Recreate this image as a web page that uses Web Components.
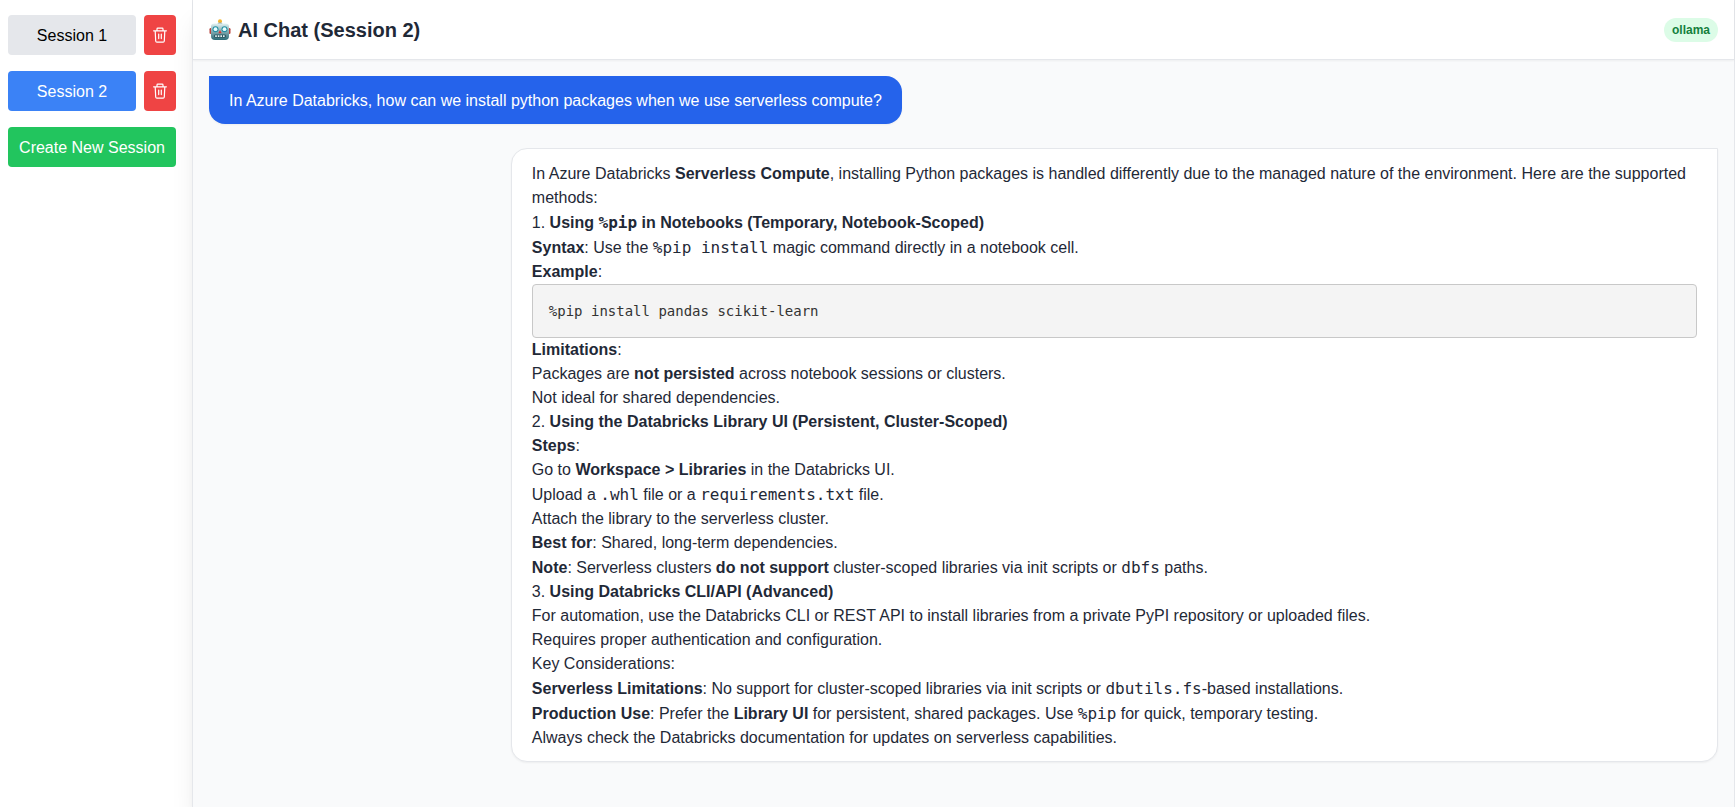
<!DOCTYPE html>
<html lang="en">
<head>
<meta charset="utf-8">
<meta name="viewport" content="width=device-width, initial-scale=1">
<title>AI Chat</title>
<style>
    body {
        margin: 0;
        font: 16px/24px "Liberation Sans", Arial, sans-serif;
        color: #1f2937;
    }
</style>
</head>
<body>
<chat-app>
    <session-list slot="sidebar">
        <session-item>Session 1</session-item>
        <session-item active>Session 2</session-item>
    </session-list>
    <chat-header slot="header" provider="ollama">AI Chat (Session 2)</chat-header>
    <chat-message from="user">In Azure Databricks, how can we install python packages when we use serverless compute?</chat-message>
    <chat-message from="ai">
        <p>In Azure Databricks <strong>Serverless Compute</strong>, installing Python packages is handled differently due to the managed nature of the environment. Here are the supported methods:</p>
        <p>1. <strong>Using <inline-code>%pip</inline-code> in Notebooks (Temporary, Notebook-Scoped)</strong></p>
        <p><strong>Syntax</strong>: Use the <inline-code>%pip install</inline-code> magic command directly in a notebook cell.</p>
        <p><strong>Example</strong>:</p>
        <code-block>%pip install pandas scikit-learn</code-block>
        <p><strong>Limitations</strong>:</p>
        <p>Packages are <strong>not persisted</strong> across notebook sessions or clusters.</p>
        <p>Not ideal for shared dependencies.</p>
        <p>2. <strong>Using the Databricks Library UI (Persistent, Cluster-Scoped)</strong></p>
        <p><strong>Steps</strong>:</p>
        <p>Go to <strong>Workspace &gt; Libraries</strong> in the Databricks UI.</p>
        <p>Upload a <inline-code>.whl</inline-code> file or a <inline-code>requirements.txt</inline-code> file.</p>
        <p>Attach the library to the serverless cluster.</p>
        <p><strong>Best for</strong>: Shared, long-term dependencies.</p>
        <p><strong>Note</strong>: Serverless clusters <strong>do not support</strong> cluster-scoped libraries via init scripts or <inline-code>dbfs</inline-code> paths.</p>
        <p>3. <strong>Using Databricks CLI/API (Advanced)</strong></p>
        <p>For automation, use the Databricks CLI or REST API to install libraries from a private PyPI repository or uploaded files.</p>
        <p>Requires proper authentication and configuration.</p>
        <p>Key Considerations:</p>
        <p><strong>Serverless Limitations</strong>: No support for cluster-scoped libraries via init scripts or <inline-code>dbutils.fs</inline-code>-based installations.</p>
        <p><strong>Production Use</strong>: Prefer the <strong>Library UI</strong> for persistent, shared packages. Use <inline-code>%pip</inline-code> for quick, temporary testing.</p>
        <p>Always check the Databricks documentation for updates on serverless capabilities.</p>
    </chat-message>
</chat-app>

<script>
function defineElement(name, html, setup) {
    const template = document.createElement("template");
    // Trailing whitespace would show up as a space after inline elements
    template.innerHTML = html.trim();

    customElements.define(name, class extends HTMLElement {
        constructor() {
            super();
            this.attachShadow({mode: "open"});
            this.shadowRoot.append(template.content.cloneNode(true));
        }

        connectedCallback() {
            if (setup) {
                setup(this, this.shadowRoot);
            }
        }
    });
}

defineElement("chat-app", `
    <style>
        :host {
            display: flex;
            min-height: 100vh;
            background-color: white;
        }

        main {
            flex: 1;
            min-width: 0;
            display: flex;
            flex-direction: column;

            border: solid #e5e7eb;
            border-width: 0 1px;
            background-color: #f9fafb;
            box-shadow: 0 20px 25px -5px rgba(0, 0, 0, 0.1), 0 8px 10px -6px rgba(0, 0, 0, 0.1);
        }

        .messages {
            display: flex;
            flex-direction: column;
            gap: 24px;
            padding: 16px;
        }
    </style>
    <slot name="sidebar"></slot>
    <main>
        <slot name="header"></slot>
        <div class="messages"><slot></slot></div>
    </main>
`);

defineElement("session-list", `
    <style>
        :host {
            flex: none;
            display: block;
            box-sizing: border-box;
            width: 192px;
            padding: 15px 16px 16px 8px;
        }

        nav {
            display: flex;
            flex-direction: column;
            gap: 16px;
        }

        button {
            padding: 9px 0 7px;
            border: 0;
            border-radius: 4px;
            background-color: #22c55e;
            color: white;
            font: inherit;
            white-space: nowrap;
            cursor: pointer;
        }
    </style>
    <nav aria-label="Sessions">
        <slot></slot>
        <button type="button">Create New Session</button>
    </nav>
`);

defineElement("session-item", `
    <style>
        :host {
            display: flex;
            gap: 8px;
        }

        button {
            padding: 9px 8px 7px;
            border: 0;
            border-radius: 4px;
            font: inherit;
            cursor: pointer;
        }

        .open {
            flex: 1;
            background-color: #e5e7eb;
            color: black;
        }

        :host([active]) .open {
            background-color: #3b82f6;
            color: white;
        }

        .delete {
            display: grid;
            place-items: center;
            padding: 8px;
            background-color: #ef4444;
            color: white;
        }
    </style>
    <button type="button" class="open"><slot></slot></button>
    <button type="button" class="delete" aria-label="Delete session">
        <svg width="16" height="16" viewBox="0 0 16 16" fill="none" stroke="currentColor" stroke-width="1.2" stroke-linecap="round" stroke-linejoin="round" aria-hidden="true">
            <path d="M1.600 3.800h12.800M5 3.600V2q0-.8.8-.8h4.400q.8 0 .8.800v1.600M3.200 4l.5 10q.1 1.200 1.200 1.200h6.200q1.100 0 1.200-1.200l.5-10"/>
            <path d="M6.700 7v4.600M9.300 7v4.600"/>
        </svg>
    </button>
`);

defineElement("robot-icon", `
    <style>
        :host {
            display: block;
            width: 22px;
            height: 22px;
        }

        svg {
            display: block;
        }
    </style>
    <svg width="22" height="22" viewBox="0 0 22 22" aria-hidden="true">
        <defs>
            <linearGradient id="face" x2="0" y2="1">
                <stop offset="0" stop-color="#e4f3f4"/>
                <stop offset="0.35" stop-color="#9dbdc2"/>
                <stop offset="1" stop-color="#2c6b77"/>
            </linearGradient>
        </defs>
        <circle cx="11" cy="2.200" r="2" fill="#f5b62c"/>
        <path d="M8.500 5q0-1.400 2.500-1.400T13.500 5z" fill="#8da5ad"/>
        <rect x="0.500" y="9" width="3" height="6" rx="1.300" fill="#b8443e"/>
        <rect x="18.500" y="9" width="3" height="6" rx="1.300" fill="#b8443e"/>
        <path d="M2 7.500q0-3 3.500-3h11q3.500 0 3.500 3v9.500q0 4-4 4H6q-4 0-4-4z" fill="url(#face)"/>
        <circle cx="6.500" cy="10.200" r="3" fill="#2590a3"/>
        <circle cx="15.500" cy="10.200" r="3" fill="#2590a3"/>
        <circle cx="6.500" cy="10.200" r="1.900" fill="#e8fcff"/>
        <circle cx="15.500" cy="10.200" r="1.900" fill="#e8fcff"/>
        <path d="M11 11l1.600 3.200H9.400z" fill="#d9352e"/>
        <rect x="5" y="15.400" width="12" height="3.400" rx="1.400" fill="#2b5963"/>
        <path d="M6.200 17.100h9.600" stroke="#e6f2f3" stroke-width="1.600" stroke-dasharray="1.600 1"/>
    </svg>
`);

defineElement("chat-header", `
    <style>
        :host {
            display: flex;
            align-items: center;
            justify-content: space-between;
            padding: 16px;
            border-bottom: 1px solid #e5e7eb;
            background-color: white;
            box-shadow: 0 1px 2px rgba(0, 0, 0, 0.05);
        }

        h1 {
            display: flex;
            align-items: center;
            gap: 7px;
            margin: 0;
            font-size: 20px;
            line-height: 27px;
        }

        .title {
            padding-top: 1px;
            line-height: 26px;
        }

        .provider {
            padding: 4px 8px;
            border-radius: 12px;
            background-color: #dcfce7;
            color: #15803d;
            font-size: 12px;
            font-weight: bold;
            line-height: 16px;
        }
    </style>
    <h1><robot-icon></robot-icon><span class="title"><slot></slot></span></h1>
    <span class="provider"></span>
`, (host, root) => {
    root.querySelector(".provider").textContent = host.getAttribute("provider");
});

defineElement("chat-message", `
    <style>
        :host {
            display: block;
            box-sizing: border-box;
            max-width: 80%;
            padding: 13px 20px 11px;
            border-radius: 16px;
            box-shadow: 0 1px 2px rgba(0, 0, 0, 0.05);
        }

        :host([from="user"]) {
            align-self: flex-start;
            border-top-left-radius: 0;
            background-color: #2563eb;
            color: white;
        }

        :host([from="ai"]) {
            align-self: flex-end;
            border: 1px solid #e5e7eb;
            border-top-right-radius: 0;
            background-color: white;
        }

        ::slotted(p) {
            margin: 0;
        }
    </style>
    <slot></slot>
`);

defineElement("inline-code", `
    <style>
        code {
            font-family: "DejaVu Sans Mono", monospace;
            font-size: 16px;
            line-height: 25px;
        }
    </style><code><slot></slot></code>
`);

defineElement("code-block", `
    <style>
        :host {
            display: block;
        }

        pre {
            margin: 0;
            padding: 16px;
            border: 1px solid #c8c8c8;
            border-radius: 4px;
            background-color: #f4f4f4;
            color: #333333;
            font: 14px/20px "DejaVu Sans Mono", monospace;
            overflow-x: auto;
        }

        code {
            font: inherit;
        }
    </style>
    <pre><code><slot></slot></code></pre>
`);
</script>
</body>
</html>
